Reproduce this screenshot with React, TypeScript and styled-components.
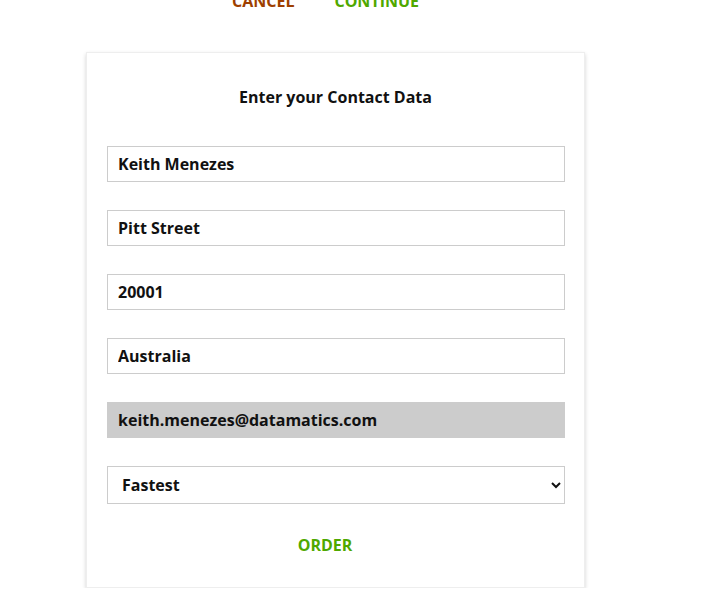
import styled, { createGlobalStyle } from 'styled-components';

const GlobalStyle = createGlobalStyle`
  body {
    margin: 0;
    background: #ffffff;
    font-family: 'Open Sans', 'Noto Sans', sans-serif;
  }
`;

const Page = styled.div`
  padding-left: 86px;
  width: 499px;
`;

const ActionRow = styled.div`
  display: flex;
  justify-content: center;
  gap: 40px;
  width: 479px;
  margin-top: -11px;
  height: 63px;
`;

const TextButton = styled.button<{ $tone: 'cancel' | 'go' }>`
  border: none;
  background: none;
  padding: 0;
  height: 24px;
  font-family: inherit;
  font-size: 16px;
  font-weight: 700;
  text-transform: uppercase;
  color: ${({ $tone }) => ($tone === 'cancel' ? '#9e3f00' : '#4fa800')};
  cursor: pointer;
`;

const Card = styled.form`
  box-sizing: border-box;
  width: 499px;
  background: #fff;
  border: 1px solid #eeeeee;
  box-shadow: 0 2px 4px rgba(0, 0, 0, 0.18);
  padding: 30px 20px 30px 20px;
  display: flex;
  flex-direction: column;
  gap: 28px;
`;

const Title = styled.h2`
  margin: 0 0 7px 0;
  text-align: center;
  font-size: 16px;
  font-weight: 700;
  color: #111;
  line-height: 28px;
`;

const Field = styled.input<{ $focused?: boolean }>`
  box-sizing: border-box;
  width: 458px;
  height: 36px;
  padding: 0 10px;
  font-family: inherit;
  font-size: 16px;
  font-weight: 700;
  color: #111;
  border: 1px solid #cccccc;
  background: ${({ $focused }) => ($focused ? '#cccccc' : '#ffffff')};
  outline: none;
`;

const Select = styled.select`
  box-sizing: border-box;
  width: 458px;
  height: 38px;
  padding: 0 10px;
  font-family: inherit;
  font-size: 16px;
  font-weight: 700;
  color: #111;
  border: 1px solid #cccccc;
  background: #fff;
  border-radius: 0;
`;

const Footer = styled.div`
  display: flex;
  justify-content: center;
  padding-right: 21px;
  margin-top: 1px;
`;

export default function App() {
  return (
    <>
      <GlobalStyle />
      <Page>
        <ActionRow>
          <TextButton type="button" $tone="cancel">Cancel</TextButton>
          <TextButton type="button" $tone="go">Continue</TextButton>
        </ActionRow>
        <Card onSubmit={(e) => e.preventDefault()}>
          <Title>Enter your Contact Data</Title>
          <Field defaultValue="Keith Menezes" />
          <Field defaultValue="Pitt Street" />
          <Field defaultValue="20001" />
          <Field defaultValue="Australia" />
          <Field defaultValue="keith.menezes@datamatics.com" $focused />
          <Select defaultValue="Fastest">
            <option>Fastest</option>
            <option>Standard</option>
          </Select>
          <Footer>
            <TextButton type="submit" $tone="go">Order</TextButton>
          </Footer>
        </Card>
      </Page>
    </>
  );
}
